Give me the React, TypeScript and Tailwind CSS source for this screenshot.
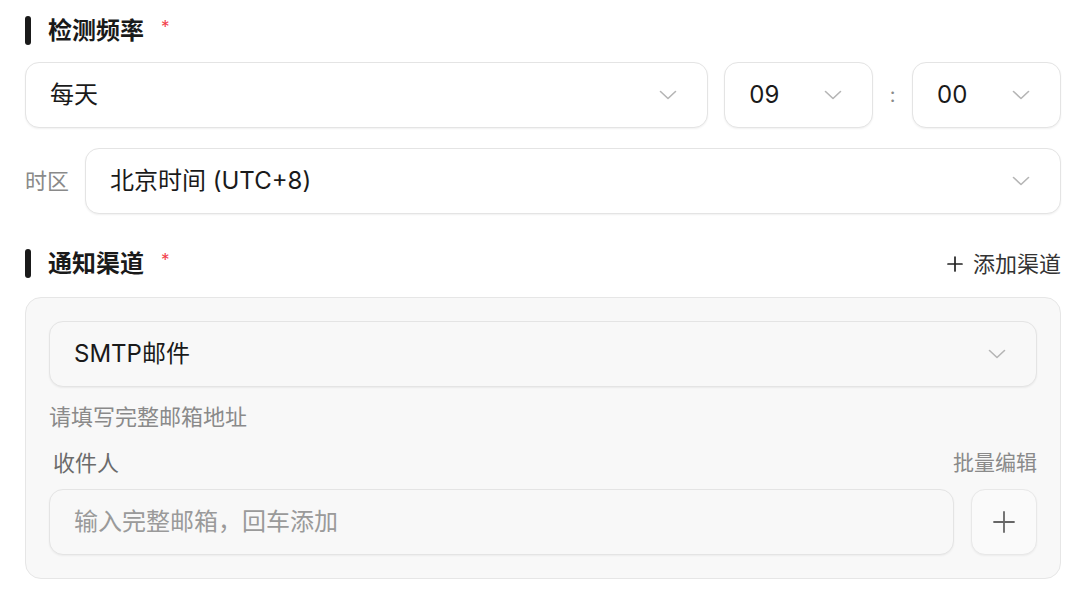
import React from 'react';

const FONT = '"Inter", "Noto Sans CJK SC", sans-serif';

function Chevron() {
  return (
    <svg width="18" height="10" viewBox="0 0 18 10" fill="none" className="shrink-0">
      <path d="M1.5 1.5L9 8.5L16.5 1.5" stroke="#b5b5b5" strokeWidth="1.6" strokeLinecap="round" strokeLinejoin="round" />
    </svg>
  );
}

function SectionTitle({ title, right }: { title: string; right?: React.ReactNode }) {
  return (
    <div className="flex items-center justify-between h-[29px]">
      <div className="flex items-center">
        <div className="w-[6px] h-[29px] rounded-full bg-[#1a1a1a]" />
        <span className="ml-[17px] text-[24px] font-semibold text-[#1a1a1a] leading-none">{title}</span>
        <span className="ml-[17px] text-[17px] text-[#f2404a] leading-none -mt-[6px]">*</span>
      </div>
      {right}
    </div>
  );
}

function Select({
  value,
  className = '',
  bg = 'bg-white',
}: {
  value: string;
  className?: string;
  bg?: string;
}) {
  return (
    <div
      className={`h-[66px] flex items-center justify-between pl-[24px] pr-[30px] rounded-[14px] border border-[#e4e4e4] shadow-[0_1px_2px_rgba(0,0,0,0.06)] ${bg} ${className}`}
    >
      <span className="text-[24px] text-[#1a1a1a] leading-none">{value}</span>
      <Chevron />
    </div>
  );
}

export default function App() {
  return (
    <div className="w-[1080px] h-[601px] bg-white pl-[25px] pr-[19px] pt-[16px]" style={{ fontFamily: FONT }}>
      <SectionTitle title="检测频率" />

      <div className="flex items-center mt-[17px]">
        <Select value="每天" className="w-[684px]" />
        <Select value="09" className="w-[149px] ml-[16px]" />
        <span className="w-[39px] text-center text-[20px] text-[#8a8a8a]">:</span>
        <Select value="00" className="w-[149px]" />
      </div>

      <div className="flex items-center mt-[20px]">
        <span className="w-[60px] text-[22px] text-[#8a8a8a]">时区</span>
        <Select value="北京时间 (UTC+8)" className="flex-1" />
      </div>

      <div className="mt-[35px]">
        <SectionTitle
          title="通知渠道"
          right={
            <div className="flex items-center text-[22px] text-[#333] leading-none">
              <svg width="16" height="16" viewBox="0 0 16 16" className="mr-[10px]">
                <path d="M8 1V15M1 8H15" stroke="#222" strokeWidth="1.7" strokeLinecap="round" />
              </svg>
              添加渠道
            </div>
          }
        />
      </div>

      <div className="mt-[19px] rounded-[16px] border border-[#e6e6e6] bg-[#f8f8f8] p-[23px]">
        <Select value="SMTP邮件" bg="bg-[#f8f8f8]" />

        <div className="mt-[16px] text-[22px] text-[#8a8a8a] leading-[28px]">请填写完整邮箱地址</div>

        <div className="mt-[18px] flex items-center justify-between px-[4px]">
          <span className="text-[22px] text-[#6b6b6b] leading-[28px]">收件人</span>
          <span className="text-[21px] text-[#8a8a8a] leading-[28px] -mr-[4px]">批量编辑</span>
        </div>

        <div className="mt-[12px] flex items-center gap-[17px]">
          <div className="flex-1 h-[66px] flex items-center pl-[24px] rounded-[14px] border border-[#e4e4e4] bg-[#f8f8f8] shadow-[0_1px_2px_rgba(0,0,0,0.05)]">
            <span className="text-[24px] text-[#9a9a9a] leading-none">输入完整邮箱，回车添加</span>
          </div>
          <button className="w-[66px] h-[66px] flex items-center justify-center rounded-[14px] border border-[#e8e8e8] bg-[#fafafa] shadow-[0_1px_2px_rgba(0,0,0,0.05)]">
            <svg width="22" height="22" viewBox="0 0 22 22">
              <path d="M11 1V21M1 11H21" stroke="#666" strokeWidth="1.8" strokeLinecap="round" />
            </svg>
          </button>
        </div>
      </div>
    </div>
  );
}
